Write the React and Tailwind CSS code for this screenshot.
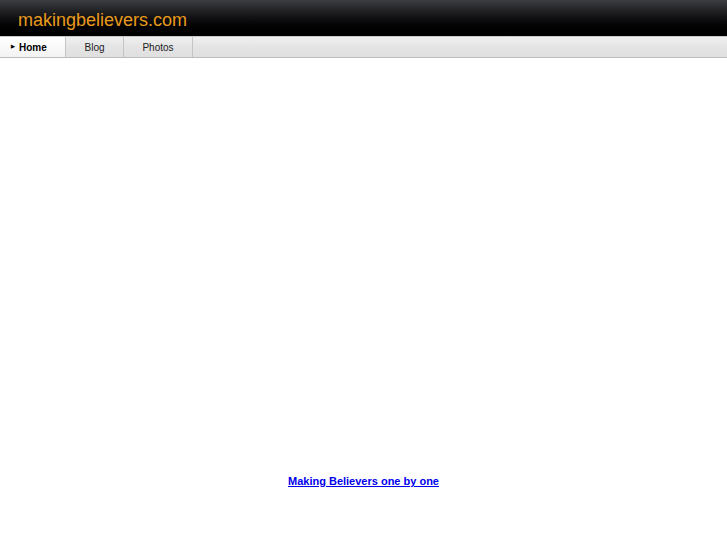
export default function App() {
  const tabs = [
    { label: 'Home', w: 'w-[66px]', active: true },
    { label: 'Blog', w: 'w-[58px]' },
    { label: 'Photos', w: 'w-[69px]' },
  ]
  return (
    <div className="min-h-[545px] bg-white font-['Liberation_Sans',Arial,sans-serif]">
      {/* Header */}
      <div className="h-9 bg-gradient-to-b from-[#3c3d41] via-[#111113] to-black flex items-center pl-[18px]">
        <span className="text-[18px] text-[#e89a1c] leading-none mt-[3px]">makingbelievers.com</span>
      </div>

      {/* Nav */}
      <div className="h-[22px] flex border-t border-[#c9c9c9] border-b border-b-[#bdbdbd] bg-gradient-to-b from-[#f0f0f0] via-[#e4e4e4] to-[#e0e0e0]">
        {tabs.map((t) => (
          <div
            key={t.label}
            className={`${t.w} flex items-center border-r border-[#c4c4c4] text-[10px] ${
              t.active
                ? 'justify-start pl-[11px] bg-gradient-to-b from-white to-[#f3f3f3] font-bold text-black'
                : 'justify-center text-[#222]'
            }`}
          >
            {t.active && <span className="text-[5px] mr-[4px]">▶</span>}
            {t.label}
          </div>
        ))}
      </div>

      {/* Footer link */}
      <div className="pt-[410px] text-center">
        <a href="#" className="text-[11px] font-bold text-[#0000ee] underline">
          Making Believers one by one
        </a>
      </div>
    </div>
  )
}
